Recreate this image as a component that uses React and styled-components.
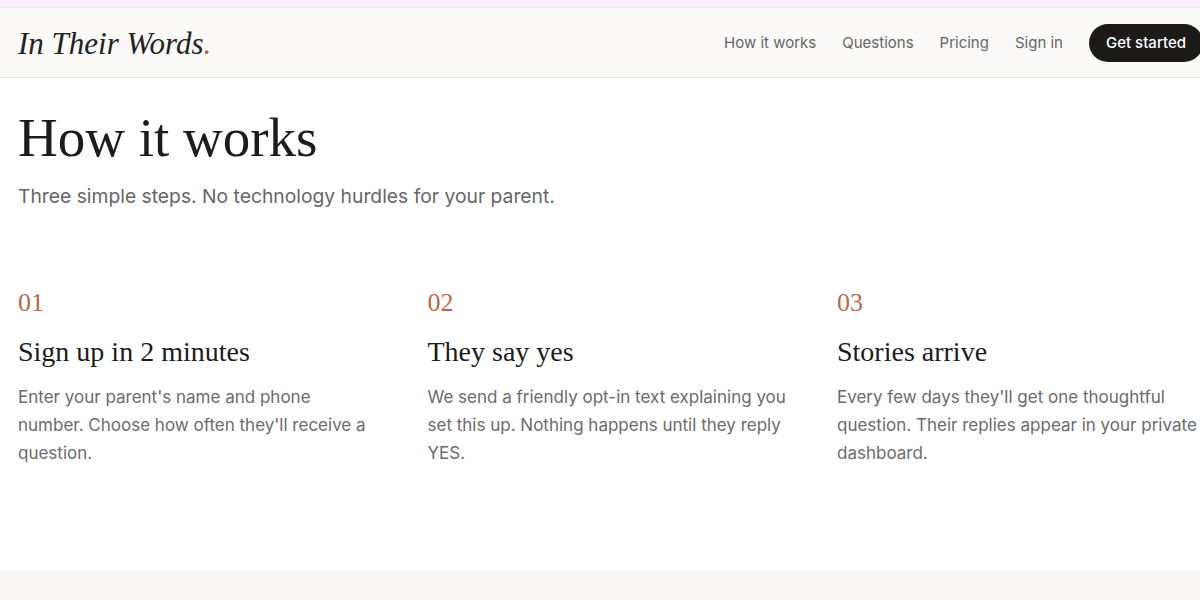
import React from "react";
import styled, { createGlobalStyle } from "styled-components";

const GlobalStyle = createGlobalStyle`
    html, body {
        margin: 0;
        padding: 0;
        background: #ffffff;
        overflow-x: hidden;
    }
    body {
        font-family: Inter, "Liberation Sans", sans-serif;
        color: #1c1c1c;
    }
`

const TopStrip = styled.div`
    height: 8px;
    background: #f8f0fb;
    border-bottom: 1px solid #f1e6f5;
    box-sizing: border-box;
`

const Header = styled.header`
    height: 70px;
    box-sizing: border-box;
    display: flex;
    align-items: center;
    justify-content: space-between;
    padding: 0 0 0 18px;
    background: #faf9f7;
    border-bottom: 1px solid #e6e4e1;
`

const Logo = styled.div`
    font-family: "Liberation Serif", serif;
    font-style: italic;
    font-size: 31px;
    color: #222;
    padding-top: 2px;

    span {
        color: #c0663f;
    }
`

const Nav = styled.nav`
    display: flex;
    align-items: center;
    gap: 26px;
`

const NavLink = styled.a`
    font-size: 15px;
    color: #666;
    text-decoration: none;
`

const CtaButton = styled.a`
    display: flex;
    align-items: center;
    height: 38px;
    padding: 0 17px;
    border-radius: 19px;
    background: #1b1a19;
    color: #fff;
    font-size: 15px;
    font-weight: 500;
    text-decoration: none;
    margin-right: -3px;
`

const Section = styled.section`
    padding: 30px 18px 0;
    height: 492px;
    box-sizing: border-box;
`

const Title = styled.h1`
    margin: 0;
    font-family: "Liberation Serif", serif;
    font-weight: 400;
    font-size: 55px;
    line-height: 1.1;
    color: #1c1c1c;
`

const Lead = styled.p`
    margin: 13px 0 0;
    font-size: 19.3px;
    line-height: 28px;
    color: #666;
`

const Steps = styled.div`
    display: grid;
    grid-template-columns: repeat(3, 361px);
    column-gap: 48.5px;
    margin-top: 77px;
    width: 1300px;
`

const Step = styled.div`
    display: flex;
    flex-direction: column;
`

const StepNumber = styled.div`
    font-family: "Liberation Serif", serif;
    font-size: 26px;
    line-height: 1.2;
    color: #b8694a;
`

const StepTitle = styled.h3`
    margin: 17px 0 0;
    font-family: "Liberation Serif", serif;
    font-weight: 400;
    font-size: 28px;
    line-height: 1.2;
    color: #1c1c1c;
`

const StepText = styled.p`
    margin: 15px 0 0;
    font-size: 17px;
    line-height: 28px;
    color: #6b6b6b;
`

const NextSection = styled.div`
    height: 40px;
    background: #f9f8f6;
`

const steps = [
    {
        num: "01",
        title: "Sign up in 2 minutes",
        text: "Enter your parent's name and phone number. Choose how often they'll receive a question.",
    },
    {
        num: "02",
        title: "They say yes",
        text: "We send a friendly opt-in text explaining you set this up. Nothing happens until they reply YES.",
    },
    {
        num: "03",
        title: "Stories arrive",
        text: "Every few days they'll get one thoughtful question. Their replies appear in your private dashboard.",
    },
];

const App = () => {
    return (
        <>
            <GlobalStyle />
            <TopStrip />
            <Header>
                <Logo>In Their Words<span>.</span></Logo>
                <Nav>
                    <NavLink href="#">How it works</NavLink>
                    <NavLink href="#">Questions</NavLink>
                    <NavLink href="#">Pricing</NavLink>
                    <NavLink href="#">Sign in</NavLink>
                    <CtaButton href="#">Get started</CtaButton>
                </Nav>
            </Header>
            <Section>
                <Title>How it works</Title>
                <Lead>Three simple steps. No technology hurdles for your parent.</Lead>
                <Steps>
                    {steps.map(s => (
                        <Step key={s.num}>
                            <StepNumber>{s.num}</StepNumber>
                            <StepTitle>{s.title}</StepTitle>
                            <StepText>{s.text}</StepText>
                        </Step>
                    ))}
                </Steps>
            </Section>
            <NextSection />
        </>
    );
}

export default App;
